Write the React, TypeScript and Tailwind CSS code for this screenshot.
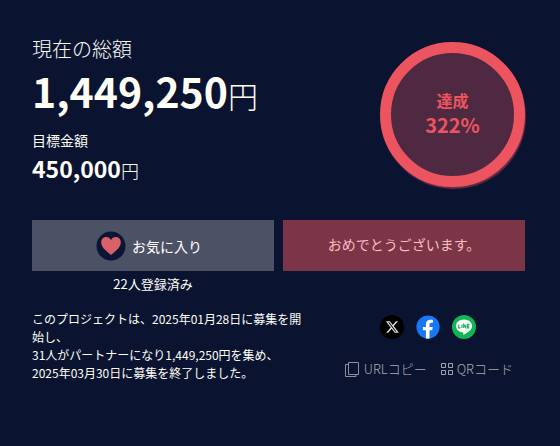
import React, { useState } from 'react';

function HeartIcon() {
  return (
    <svg viewBox="0 0 30 30" className="h-[30px] w-[30px]" aria-hidden="true">
      <circle cx="15" cy="15" r="14.5" fill="#0c1533" />
      <path
        d="M15 24C13.5 22 5.2 17.5 5.2 11.4C5.2 8.2 7.4 6.1 10.1 6.1C12.4 6.1 14.2 7.3 15 9.3C15.8 7.3 17.6 6.1 19.9 6.1C22.6 6.1 24.8 8.2 24.8 11.4C24.8 17.5 16.5 22 15 24Z"
        fill="#dc6067"
      />
    </svg>
  );
}

function XLogo() {
  return (
    <svg viewBox="0 0 24 24" className="h-6 w-6" aria-hidden="true">
      <circle cx="12" cy="12" r="12" fill="#000" />
      <g transform="translate(5.1 4.8) scale(0.6)">
        <path
          d="M18.244 2.25h3.308l-7.227 8.26 8.502 11.24H16.17l-5.214-6.817L4.99 21.75H1.68l7.73-8.835L1.254 2.25H8.08l4.713 6.231zm-1.161 17.52h1.833L7.084 4.126H5.117z"
          fill="#e4e4e4"
        />
      </g>
    </svg>
  );
}

function FacebookLogo() {
  return (
    <svg viewBox="0 0 24 24" className="h-6 w-6" aria-hidden="true">
      <circle cx="12" cy="12" r="11.6" fill="#1877f2" />
      <path
        d="M16.2 15.3l.5-3.4h-3.2V9.7c0-1 .5-1.9 1.9-1.9h1.5V4.9s-1.3-.2-2.6-.2c-2.7 0-4.4 1.6-4.4 4.6v2.6H6.9v3.4h3v8.2c1.2.2 2.4.2 3.6 0v-8.2z"
        fill="#fff"
      />
    </svg>
  );
}

function LineLogo() {
  return (
    <svg viewBox="0 0 24 24" className="h-6 w-6" aria-hidden="true">
      <circle cx="12" cy="12" r="12" fill="#11b552" />
      <path
        d="M12 4.6c-4.5 0-8.1 2.9-8.1 6.5 0 3.2 2.9 5.9 6.8 6.4.9.2.7.6.5 2 0 .4.1.6.6.3 2.5-1.4 5.4-3.3 7-5.2.9-1 1.3-2.2 1.3-3.5 0-3.6-3.6-6.5-8.1-6.5z"
        fill="#fff"
      />
      <path
        d="M6.7 9.4v3.5h1.9M10 9.4v3.5M11.7 12.9V9.4l2.2 3.5V9.4M17.4 9.4h-1.8v3.5h1.8M15.6 11.1h1.6"
        fill="none"
        stroke="#11b552"
        strokeWidth="1.1"
      />
    </svg>
  );
}

function CopyIcon() {
  return (
    <svg viewBox="0 0 16 17" className="h-[17px] w-4" fill="none" stroke="#8b909d" aria-hidden="true">
      <path d="M4.5 1.5h10v12h-10z" />
      <path d="M4 3.5H1.5v12H12V14" />
    </svg>
  );
}

function QrIcon() {
  return (
    <svg viewBox="0 0 12 12" className="h-3 w-3" fill="none" stroke="#a3a6ad" aria-hidden="true">
      <path d="M.5 .5h4v4h-4zM7.5 .5h4v4h-4zM.5 7.5h4v4h-4zM7.5 7.5h4v4h-4z" />
    </svg>
  );
}

const shareLinks = [
  { label: 'X', icon: <XLogo /> },
  { label: 'Facebook', icon: <FacebookLogo /> },
  { label: 'LINE', icon: <LineLogo /> },
];

export default function App() {
  const [favorite, setFavorite] = useState(true);

  return (
    <main
      lang="ja"
      className="min-h-screen bg-[#0a1431] pt-9 pr-[35px] pb-10 pl-8 font-['Noto_Sans_CJK_JP',sans-serif] text-[#fffef6]"
    >
      <div className="flex items-start justify-between">
        <dl>
          <dt className="text-[20px] leading-[26px] font-light">現在の総額</dt>
          <dd className="text-[41px] leading-[56px] font-bold">
            1,449,250<span className="text-[30px] leading-none font-light">円</span>
          </dd>
          <dt className="mt-3 text-sm leading-[20px]">目標金額</dt>
          <dd className="mt-1 text-[23px] leading-[28px] font-bold">
            450,000<span className="text-[18px] leading-none font-light">円</span>
          </dd>
        </dl>
        <div className="mt-1.5 flex size-[145px] shrink-0 flex-col items-center justify-center rounded-full border-[11px] border-[#ec555f] bg-[#4e2941] pb-1 font-bold text-[#ec555f] shadow-[1px_2px_1px_#6b2d43]">
          <p className="text-base leading-[24px]">達成</p>
          <p className="text-[20px] leading-[26px]">322%</p>
        </div>
      </div>

      <div className="mt-[33px] grid grid-cols-2 items-start gap-[9px]">
        <div>
          <button
            type="button"
            aria-pressed={favorite}
            onClick={() => setFavorite(!favorite)}
            className="flex h-[51px] w-full items-center justify-center gap-1.5 bg-[#4d5166] pr-2 text-sm text-white"
          >
            <HeartIcon />
            お気に入り
          </button>
          <p className="mt-1 text-center text-[13px] leading-[18px]">22人登録済み</p>
        </div>
        <button type="button" disabled className="h-[51px] w-full bg-[#7b3547] pb-1 text-sm text-[#f7bfc0]">
          おめでとうございます。
        </button>
      </div>

      <div className="mt-[17px] flex items-start justify-between">
        <p className="w-[57%] text-xs leading-[18px]">
          このプロジェクトは、2025年01月28日に募集を開始し、
          <br />
          31人がパートナーになり1,449,250円を集め、
          <br />
          2025年03月30日に募集を終了しました。
        </p>
        <div className="flex flex-col gap-5 pt-[5px] pr-3">
          <div className="flex gap-3 pl-9">
            {shareLinks.map((link) => (
              <a key={link.label} href="#" aria-label={link.label}>
                {link.icon}
              </a>
            ))}
          </div>
          <div className="flex items-center gap-3.5 text-[13px] leading-[20px] font-light text-[#a9abb2]">
            <button type="button" className="flex items-center gap-1">
              <CopyIcon />
              URLコピー
            </button>
            <button type="button" className="flex items-center gap-1">
              <QrIcon />
              QRコード
            </button>
          </div>
        </div>
      </div>
    </main>
  );
}
